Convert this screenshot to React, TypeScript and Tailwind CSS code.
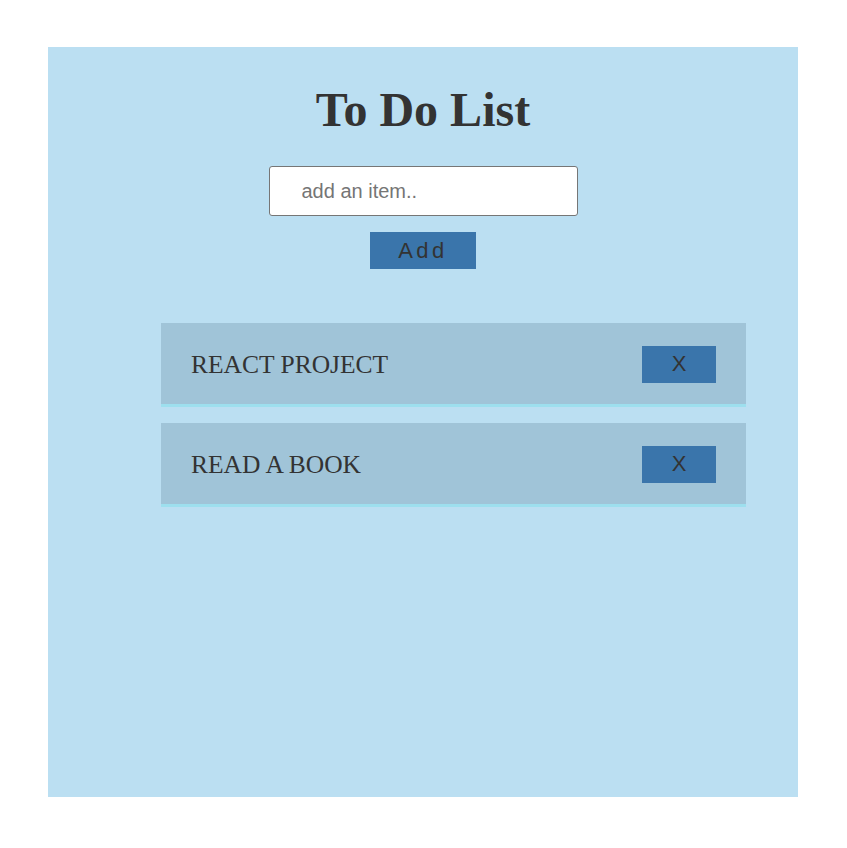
export default function App() {
  const items = ["REACT PROJECT", "READ A BOOK"];
  return (
    <div className="w-[847px] h-[848px] bg-white pt-[47px]">
      <div className="ml-[48px] w-[750px] h-[750px] bg-[#bbdff2] flex flex-col items-center pt-[39px]">
        <h1 className="text-[48px] leading-none font-bold text-[#333333] m-0 font-['Liberation_Serif','Times_New_Roman',serif]">
          To Do List
        </h1>
        <input
          type="text"
          placeholder="add an item.."
          className="mt-[32px] w-[309px] h-[50px] bg-white border border-[#767676] rounded-[3px] pl-[32px] text-[20px] placeholder:text-[#757575] outline-none font-['Liberation_Sans',Arial,sans-serif]"
        />
        <button className="mt-[16px] w-[106px] h-[37px] bg-[#3a75ab] text-[#333333] text-[22px] tracking-[3.5px] leading-none font-['Liberation_Sans',Arial,sans-serif]">
          Add
        </button>
        <div className="mt-[54px] w-[585px] flex flex-col gap-[16px] self-start ml-[113px]">
          {items.map((t) => (
            <div
              key={t}
              className="h-[84px] bg-[#a0c4d8] border-b-[3px] border-[#9ddfee] flex items-center justify-between px-[30px]"
            >
              <span className="mt-[3px] text-[25.5px] text-[#333333] font-['Liberation_Serif','Times_New_Roman',serif]">
                {t}
              </span>
              <button className="mt-[1px] w-[74px] h-[37px] bg-[#3a75ab] text-[#333333] text-[22px] leading-none font-['Liberation_Sans',Arial,sans-serif]">
                X
              </button>
            </div>
          ))}
        </div>
      </div>
    </div>
  );
}
